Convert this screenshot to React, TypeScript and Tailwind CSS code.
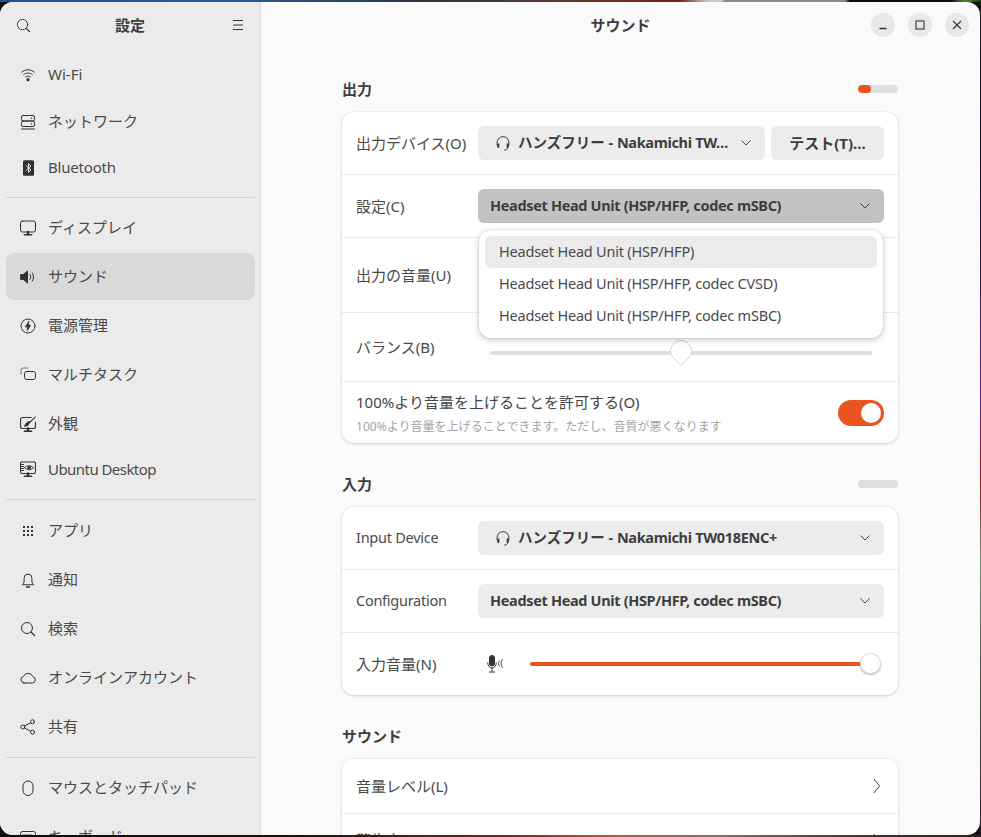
import React from "react";

const S = "fill-none stroke-current";

function Ic({ children, size = 16 }: { children: React.ReactNode; size?: number }) {
  return (
    <svg width={size} height={size} viewBox="0 0 16 16" className={`shrink-0 ${S}`} strokeWidth={1} strokeLinecap="round" strokeLinejoin="round">
      {children}
    </svg>
  );
}

const icons: Record<string, React.ReactNode> = {
  wifi: (
    <>
      <path d="M1.500 5.200C5.200 2 10.800 2 14.500 5.200" />
      <path d="M3.600 7.600C6.100 5.500 9.900 5.500 12.400 7.600" />
      <path d="M5.600 9.900C7 8.800 9 8.800 10.400 9.900" />
      <circle cx="8" cy="12.700" r="1.600" fill="currentColor" stroke="none" />
    </>
  ),
  network: (
    <>
      <rect x="1.500" y="1.500" width="13" height="5.500" rx="1.500" />
      <rect x="1.500" y="7" width="13" height="5.500" rx="1.500" />
      <path d="M1.500 15h13" strokeWidth={1.200} />
      <circle cx="11.500" cy="4.200" r=".7" fill="currentColor" stroke="none" />
      <circle cx="11.500" cy="9.800" r=".7" fill="currentColor" stroke="none" />
    </>
  ),
  bluetooth: (
    <>
      <rect x="3" y="0.200" width="11" height="15.600" rx="1.500" fill="#2e2e2e" stroke="none" />
      <path d="M6 5.500l5 4.500-2.500 2.500v-9L11 6l-5 4.500" stroke="#fff" strokeWidth={0.9} />
    </>
  ),
  display: (
    <>
      <rect x="0.500" y="1" width="15" height="11" rx="2" />
      <path d="M4.500 14.800h7" strokeWidth={1.600} />
      <path d="M8 12v2" strokeWidth={2.500} />
    </>
  ),
  sound: (
    <>
      <path d="M1 5.500h2.500L7.500 2v12L3.500 10.500H1z" fill="currentColor" />
      <path d="M10 5.500c1 1.400 1 3.600 0 5" />
      <path d="M12.300 4c1.700 2.400 1.700 5.600 0 8" />
    </>
  ),
  power: (
    <>
      <circle cx="8" cy="8" r="7" />
      <path d="M8.800 3.500L5.500 8.800h2.400L7.200 12.500l3.300-5.300H8.100z" fill="currentColor" />
    </>
  ),
  multitask: (
    <>
      <rect x="4.500" y="4.500" width="11" height="8" rx="2.200" />
      <path d="M1 7V3a2 2 0 0 1 2-2h5" stroke="#777" />
    </>
  ),
  appearance: (
    <>
      <path d="M11 1.500H2.500a2 2 0 0 0-2 2v7a2 2 0 0 0 2 2h11a2 2 0 0 0 2-2V6" strokeWidth={1.200} />
      <path d="M4.500 15.300h7" strokeWidth={1.600} />
      <path d="M8 12.500v2.500" strokeWidth={2.500} />
      <path d="M4.800 10c2.200.4 3.900-.5 4-2.300L15.500.8l-5.400 5C7.200 5.200 5.400 7.700 4.800 10z" fill="currentColor" />
    </>
  ),
  ubuntu: (
    <>
      <rect x="0.500" y="1" width="15" height="11.500" rx="1.500" strokeWidth={1.100} />
      <path d="M4.500 15.300h7" strokeWidth={1.600} />
      <path d="M8 12.500v2.500" strokeWidth={2.500} />
      <path d="M4.500 6.700C6.500 4 10.500 4 13.500 6.700 10.500 9.400 6.500 9.400 4.500 6.700z" />
      <circle cx="9" cy="6.700" r="1.400" fill="currentColor" />
      <path d="M1.500 3.500h2M1.500 5.500h2M1.500 7.500h2M1.500 9.500h2" />
    </>
  ),
  apps: (
    <>
      {[3, 7, 11].map((y) =>
        [3, 7, 11].map((x) => <rect key={`${x}-${y}`} x={x} y={y} width="2" height="2" fill="currentColor" stroke="none" />)
      )}
    </>
  ),
  bell: (
    <>
      <path d="M2.500 12.500c1.200-1 1.600-2 1.600-3.500V6a3.900 3.900 0 0 1 7.800 0v3c0 1.500.4 2.500 1.600 3.500z" />
      <path d="M6.500 15h3" strokeWidth={1.600} />
    </>
  ),
  search: (
    <>
      <circle cx="7" cy="7" r="5.500" />
      <path d="M11 11l3.500 3.500" strokeWidth={1.300} />
    </>
  ),
  cloud: <path d="M4 13h8.300a3.200 3.200 0 0 0 .6-6.300A5 5 0 0 0 3.600 6.300 3.400 3.400 0 0 0 4 13z" />,
  share: (
    <>
      <circle cx="2.800" cy="8" r="2" />
      <circle cx="12.500" cy="2.800" r="2" />
      <circle cx="12.500" cy="13.200" r="2" />
      <path d="M4.600 7l6-3.200M4.600 9l6 3.200" />
    </>
  ),
  mouse: <rect x="3" y="1" width="10" height="14.500" rx="5" />,
  keyboard: (
    <>
      <rect x="0.500" y="2.500" width="15" height="11" rx="2" />
      <path d="M3 6h10M4 10h8" strokeDasharray="1 1" />
    </>
  ),
};

function Row({ icon, label, h, active, track = "" }: { icon: string; label: string; h: number; active?: boolean; track?: string }) {
  return (
    <div
      className={`flex shrink-0 items-center gap-[12px] rounded-[8px] pl-[14px] text-[15px] text-[#4a4a4a] ${active ? "bg-[#d9d9d9]" : ""}`}
      style={{ height: h }}
    >
      <span className="text-[#333333]">
        <Ic>{icons[icon]}</Ic>
      </span>
      <span className={track}>{label}</span>
    </div>
  );
}

function Sep({ mt, mb }: { mt: number; mb: number }) {
  return <div className="h-px shrink-0 bg-[#d3d3d3]" style={{ marginTop: mt, marginBottom: mb }} />;
}

function Chevron() {
  return (
    <svg width="12" height="8" viewBox="0 0 12 8" className="shrink-0 fill-none stroke-[#444444]" strokeWidth={1}>
      <path d="M1.500 1.500L6 6l4.500-4.500" />
    </svg>
  );
}

function Headset() {
  return (
    <svg width="14" height="15" viewBox="0 0 14 15" className="shrink-0 fill-none stroke-[#333333]" strokeWidth={1}>
      <path d="M1.200 9.500C.4 4 3 .7 7 .7s6.600 3.300 5.800 8.800" />
      <path d="M2.300 7.500v4.300" strokeWidth={2} />
      <path d="M11.700 7.500v4.300" strokeWidth={2} />
      <path d="M11.700 11.500c0 1.800-1.500 2.600-3.500 2.600" />
    </svg>
  );
}

function Select({ text, latin, headset, pressed, w }: { text?: string; latin?: string; headset?: boolean; pressed?: boolean; w?: string }) {
  return (
    <div
      className={`flex h-[34px] min-w-0 items-center rounded-[6px] pr-[13px] text-[14.500px] font-bold text-[#3d3d3d] ${w ?? "flex-1"} ${
        pressed ? "bg-[#c2c2c2]" : "bg-[#ececec]"
      } ${headset ? "pl-[18px]" : "pl-[12px]"}`}
    >
      {headset && (
        <span className="mr-[8px] flex">
          <Headset />
        </span>
      )}
      <span className="min-w-0 flex-1 whitespace-nowrap pr-[8px]">
        {text}
        <span className="tracking-[-0.34px]">{latin}</span>
      </span>
      <Chevron />
    </div>
  );
}

function Card({ children, className = "" }: { children: React.ReactNode; className?: string }) {
  return (
    <div className={`rounded-[12px] bg-white shadow-[0_0_0_1px_rgba(0,0,0,0.03),0_1px_3px_rgba(0,0,0,0.14)] ${className}`}>{children}</div>
  );
}

function CardRow({ h, first, children }: { h: number; first?: boolean; children: React.ReactNode }) {
  return (
    <div className={`flex items-center px-[14px] ${first ? "" : "border-t border-[#e9e9e9]"}`} style={{ height: h }}>
      {children}
    </div>
  );
}

function Label({ children, latin }: { children: React.ReactNode; latin?: boolean }) {
  return <div className={`w-[122px] shrink-0 text-[#4a4a4a] ${latin ? "text-[14.500px] tracking-[-0.26px]" : "text-[15px]"}`}>{children}</div>;
}

function Heading({ children, bar }: { children: React.ReactNode; bar?: "on" | "off" }) {
  return (
    <div className="mb-[13px] flex h-[20px] items-center justify-between">
      <div className="text-[15px] font-bold text-[#3d3d3d]">{children}</div>
      {bar && (
        <div className="h-[8px] w-[40px] overflow-hidden rounded-full bg-[#dedede]">
          {bar === "on" && <div className="h-full w-[13px] rounded-full bg-[#e95420]" />}
        </div>
      )}
    </div>
  );
}

function WinBtn({ children }: { children: React.ReactNode }) {
  return (
    <div className="flex h-[24px] w-[24px] items-center justify-center rounded-full bg-[#e8e8e8] text-[#333333]">
      <svg width="12" height="12" viewBox="0 0 12 12" className="fill-none stroke-current" strokeWidth={1.100}>
        {children}
      </svg>
    </div>
  );
}

export default function App() {
  return (
    <div className="h-[837px] w-[981px] overflow-hidden pt-[2px] pr-[1px] pb-[2px] font-['Noto_Sans','Noto_Sans_CJK_JP',sans-serif] [background:linear-gradient(90deg,#24528a_0,#2b5d94_240px,#2a3440_420px,#5a3a30_560px,#7d1f14_680px,#c9c9c9_708px,#c9c9c9_722px,#8a8a8a_724px,#8a8a8a_845px,#0c0c0c_850px,#0c0c0c_950px,#4d8a2e_965px,#1a3b16_981px)_top/100%_2px_no-repeat,linear-gradient(90deg,#0a0a0a_0,#1a1210_300px,#6d2a22_500px,#a85a3a_600px,#8a6a66_720px,#50302f_860px,#2a2020_981px)_bottom/100%_2px_no-repeat,linear-gradient(180deg,#1c1c1c_0,#10082a_150px,#6a1f8a_400px,#a01c1c_480px,#6a8a6a_560px,#2b1a2a_837px)_right/1px_100%_no-repeat,#101010]">
      <div className="flex h-full w-full overflow-hidden rounded-[13px] bg-[#fafafa]">
        {/* Sidebar */}
        <aside className="flex w-[261px] shrink-0 flex-col overflow-hidden border-r border-[#dcdcdc] bg-[#ebebeb]">
          <div className="flex h-[46px] shrink-0 items-center justify-between px-[16px] text-[#333333]">
            <Ic size={15}>{icons.search}</Ic>
            <span className="text-[15px] font-bold text-[#3d3d3d]">設定</span>
            <span className="flex w-[15px] justify-end">
              <svg width="12" height="12" viewBox="0 0 12 12" className="fill-none stroke-current" strokeWidth={1}>
                <path d="M1 1.500h10M1 6h10M1 10.500h10" />
              </svg>
            </span>
          </div>
          <div className="flex min-h-0 flex-1 flex-col overflow-hidden pt-[5px] pr-[5px] pl-[6px]">
            <div className="flex flex-col gap-[2px]">
              <Row icon="wifi" label="Wi-Fi" h={43} />
              <Row icon="network" label="ネットワーク" h={47} />
              <Row icon="bluetooth" label="Bluetooth" h={41} track="tracking-[-0.2px]" />
            </div>
            <Sep mt={9} mb={6} />
            <div className="flex flex-col gap-[2px]">
              <Row icon="display" label="ディスプレイ" h={47} />
              <Row icon="sound" label="サウンド" h={47} active />
              <Row icon="power" label="電源管理" h={47} />
              <Row icon="multitask" label="マルチタスク" h={47} />
              <Row icon="appearance" label="外観" h={47} />
              <Row icon="ubuntu" label="Ubuntu Desktop" h={40} track="tracking-[-0.55px]" />
            </div>
            <Sep mt={10} mb={7} />
            <div className="flex flex-col gap-[2px]">
              <Row icon="apps" label="アプリ" h={47} />
              <Row icon="bell" label="通知" h={47} />
              <Row icon="search" label="検索" h={47} />
              <Row icon="cloud" label="オンラインアカウント" h={47} />
              <Row icon="share" label="共有" h={47} />
            </div>
            <Sep mt={7} mb={6} />
            <div className="flex flex-col gap-[2px]">
              <Row icon="mouse" label="マウスとタッチパッド" h={47} />
              <Row icon="keyboard" label="キーボード" h={47} />
            </div>
          </div>
        </aside>

        {/* Content */}
        <section className="flex min-w-0 flex-1 flex-col overflow-hidden">
          <header className="relative flex h-[46px] shrink-0 items-center justify-center">
            <span className="text-[15px] font-bold text-[#3d3d3d]">サウンド</span>
            <div className="absolute top-[11px] right-[11px] flex gap-[13px]">
              <WinBtn>
                <path d="M2.500 9.500h7" strokeWidth={1.300} />
              </WinBtn>
              <WinBtn>
                <rect x="2" y="2" width="8" height="8" />
              </WinBtn>
              <WinBtn>
                <path d="M2 2l8 8M10 2l-8 8" />
              </WinBtn>
            </div>
          </header>

          <main className="min-h-0 flex-1 overflow-hidden pt-[31px] pr-[82px] pl-[81px]">
            <Heading bar="on">出力</Heading>
            <Card className="relative mb-[31px]">
              <CardRow h={62} first>
                <Label>出力デバイス(O)</Label>
                <Select text="ハンズフリー - " latin="Nakamichi TW…" headset w="w-[287px]" />
                <div className="ml-[6px] flex h-[34px] flex-1 items-center justify-center rounded-[6px] bg-[#ececec] text-[15px] font-bold text-[#3d3d3d]">
                  テスト(T)...
                </div>
              </CardRow>
              <CardRow h={63}>
                <Label>設定(C)</Label>
                <Select latin="Headset Head Unit (HSP/HFP, codec mSBC)" pressed />
              </CardRow>
              <CardRow h={75}>
                <Label>出力の音量(U)</Label>
              </CardRow>
              <CardRow h={69}>
                <Label>バランス(B)</Label>
                <div className="relative mt-[12px] mr-[12px] ml-[12px] h-[4px] flex-1 rounded-full bg-[#dfdfdf]">
                  <svg width="24" height="28" viewBox="0 0 24 28" className="absolute top-[-12px] left-[179px] overflow-visible">
                    <path d="M12 1.500a10.500 10.500 0 0 1 10.500 10.500c0 2.800-1 4.600-2.800 6.400L13.200 25a1.700 1.700 0 0 1-2.400 0l-6.500-6.600C2.500 16.600 1.500 14.800 1.500 12A10.500 10.500 0 0 1 12 1.500z" fill="#fff" stroke="#d8d8d8" />
                  </svg>
                </div>
              </CardRow>
              <CardRow h={62}>
                <div className="mt-[2px] min-w-0 flex-1">
                  <div className="text-[15px] leading-[20px] text-[#444444]">100%より音量を上げることを許可する(O)</div>
                  <div className="mt-[6px] text-[12px] leading-[17px] tracking-[0.03px] text-[#a3a3a3]">100%より音量を上げることできます。ただし、音質が悪くなります</div>
                </div>
                <div className="flex h-[26px] w-[46px] shrink-0 items-center justify-end rounded-full bg-[#e95420] pr-[3px]">
                  <div className="h-[20px] w-[20px] rounded-full bg-white" />
                </div>
              </CardRow>

              {/* Dropdown popup */}
              <div className="absolute top-[118px] left-[137px] flex h-[108px] w-[404px] flex-col rounded-[12px] bg-white p-[6px] shadow-[0_0_0_1px_rgba(0,0,0,0.05),0_2px_6px_rgba(0,0,0,0.22)]">
                {["Headset Head Unit (HSP/HFP)", "Headset Head Unit (HSP/HFP, codec CVSD)", "Headset Head Unit (HSP/HFP, codec mSBC)"].map((t, i) => (
                  <div
                    key={t}
                    className={`flex h-[32px] items-center rounded-[6px] pl-[14px] text-[14.500px] tracking-[-0.21px] text-[#4a4a4a] ${i === 0 ? "bg-[#ebebeb]" : ""}`}
                  >
                    {t}
                  </div>
                ))}
              </div>
            </Card>

            <Heading bar="off">入力</Heading>
            <Card className="mb-[31px]">
              <CardRow h={62} first>
                <Label latin>Input Device</Label>
                <Select text="ハンズフリー - " latin="Nakamichi TW018ENC+" headset />
              </CardRow>
              <CardRow h={63}>
                <Label latin>Configuration</Label>
                <Select latin="Headset Head Unit (HSP/HFP, codec mSBC)" />
              </CardRow>
              <CardRow h={63}>
                <Label>入力音量(N)</Label>
                <div className="ml-[9px] flex shrink-0 text-[#333333]">
                  <svg width="17" height="18" viewBox="0 0 17 18" className="fill-none stroke-current" strokeWidth={1}>
                    <rect x="2.500" y="0.500" width="5" height="10.500" rx="2.500" fill="currentColor" />
                    <path d="M0.700 7.500c0 3 1.800 5.500 4.300 5.500s4.300-2.500 4.300-5.500M5 13v3.500M2 17h6" />
                    <path d="M12.500 5.500c-1.300 1.800-1.300 4 0 6M15.500 4c-1.800 2.800-1.800 6.200 0 9" stroke="#555" />
                  </svg>
                </div>
                <div className="relative mr-[14px] ml-[26px] h-[4px] flex-1 rounded-full bg-[#e95420]">
                  <div className="absolute top-[-9px] right-[-11px] h-[21px] w-[21px] rounded-full border border-[#dddddd] bg-white shadow-[0_1px_2px_rgba(0,0,0,0.3)]" />
                </div>
              </CardRow>
            </Card>

            <Heading>サウンド</Heading>
            <Card>
              <CardRow h={54} first>
                <div className="flex-1 text-[15px] text-[#4a4a4a]">音量レベル(L)</div>
                <svg width="8" height="16" viewBox="0 0 8 16" className="mr-[3px] fill-none stroke-[#444444]" strokeWidth={1}>
                  <path d="M1 1l5.500 7L1 15" />
                </svg>
              </CardRow>
              <CardRow h={54}>
                <div className="flex-1 text-[15px] text-[#4a4a4a]">警告音(A)</div>
                <svg width="8" height="16" viewBox="0 0 8 16" className="mr-[3px] fill-none stroke-[#444444]" strokeWidth={1}>
                  <path d="M1 1l5.500 7L1 15" />
                </svg>
              </CardRow>
            </Card>
          </main>
        </section>
      </div>
    </div>
  );
}
